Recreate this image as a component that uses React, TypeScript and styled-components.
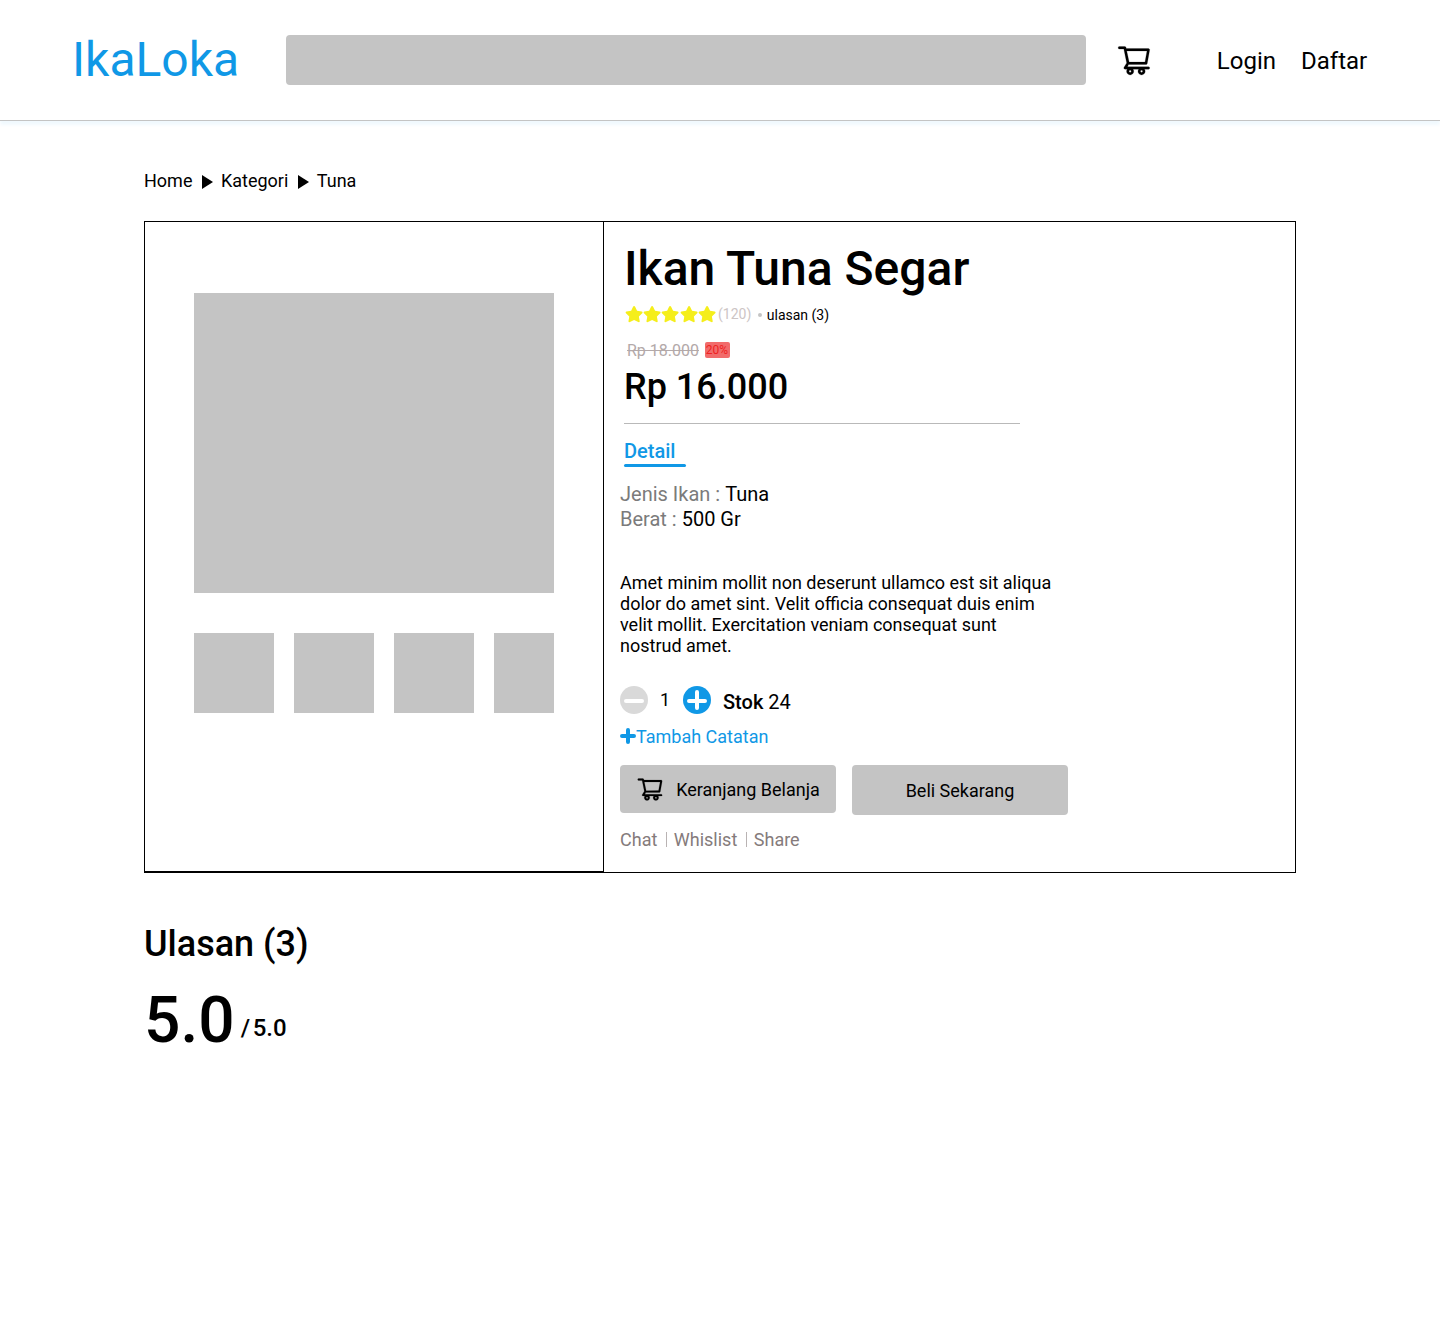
import React from "react";
import styled, { createGlobalStyle } from "styled-components";
import { AiOutlineShoppingCart } from "react-icons/ai";
import { FaStar } from "react-icons/fa";

const BLUE = "#1098e6";
const GREY = "#c4c4c4";

const GlobalStyle = createGlobalStyle`
  * { box-sizing: border-box; }
  body { margin: 0; background: #fff; color: #000; font-family: Roboto, "Liberation Sans", sans-serif; }
  h1, h2, p { margin: 0; font-weight: inherit; }
  button { font: inherit; color: inherit; border: 0; padding: 0; background: none; }
`;

const Text = styled.span<{ $size: number; $weight?: number; $color?: string }>`
  font-size: ${(p) => p.$size}px;
  line-height: ${(p) => Math.round(p.$size * 1.172)}px;
  font-weight: ${(p) => p.$weight ?? 400};
  color: ${(p) => p.$color ?? "#000"};
  white-space: nowrap;
`;

const Page = styled.div`
  min-height: 1336px;
`;

const Header = styled.header`
  display: flex;
  align-items: center;
  height: 121px;
  padding: 0 72.8px 1px 72px;
  border-bottom: 1px solid ${GREY};
  box-shadow: 0 4px 3px rgba(16, 152, 230, 0.06);
`;

const Logo = styled.div`
  width: 214px;
  font-size: 48px;
  line-height: 56px;
  color: ${BLUE};
`;

const Search = styled.div`
  width: 800px;
  height: 50px;
  border-radius: 4px;
  background: ${GREY};
`;

const CartIcon = styled(AiOutlineShoppingCart)`
  flex: none;
  stroke: currentColor;
  stroke-width: 6px;
`;

const HeaderCart = styled.div`
  display: flex;
  margin-left: 30px;
`;

const Nav = styled.nav`
  display: flex;
  gap: 25px;
  margin-left: auto;
  padding-top: 2px;
`;

const Main = styled.main`
  width: 1152px;
  margin: 0 auto;
  padding-top: 49px;
`;

const Breadcrumb = styled.div`
  display: flex;
  align-items: center;
  height: 21px;
`;

const Arrow = styled.i`
  margin: 2px 7.5px 0 10px;
  border-left: 11px solid #000;
  border-top: 7px solid transparent;
  border-bottom: 7px solid transparent;
`;

const Card = styled.section`
  display: flex;
  height: 652px;
  margin-top: 30px;
  border: 1px solid #000;
`;

const Gallery = styled.div`
  width: 459px;
  border-right: 1px solid #000;
  border-bottom: 1px solid #000;
  padding: 71px 49px 0;
`;

const MainPhoto = styled.div`
  height: 300px;
  background: ${GREY};
`;

const Thumbs = styled.div`
  display: flex;
  gap: 20px;
  width: 360px;
  margin-top: 40px;
  overflow: hidden;
`;

const Thumb = styled.div`
  flex: 0 0 80px;
  height: 80px;
  background: ${GREY};
`;

const Info = styled.div`
  flex: 1;
  padding: 19px 0 0 16px;
`;

const Summary = styled.div`
  padding-left: 4px;
`;

const Title = styled.h1`
  font-size: 48px;
  line-height: 56px;
  font-weight: 500;
`;

const Rating = styled.div`
  display: flex;
  align-items: center;
  height: 18px;
  margin-top: 8px;
  padding-left: 1px;
`;

const Stars = styled.div`
  display: flex;
  width: 93px;
  padding-top: 1px;
`;

const Star = styled(FaStar)`
  flex: none;
  width: 18.2px;
  height: 16.2px;
  color: #f5ee1b;
`;

const ReviewCount = styled(Text)`
  margin-top: 2px;
`;

const Dot = styled.i`
  width: 4px;
  height: 4px;
  margin: 2px 5px 0 6.5px;
  border-radius: 50%;
  background: ${GREY};
`;

const OldPrice = styled.div`
  display: flex;
  align-items: center;
  gap: 6px;
  height: 19px;
  margin: 18px 0 0 3px;
`;

const Discount = styled.span`
  width: 25px;
  height: 16px;
  margin-top: -1px;
  padding-right: 1px;
  border-radius: 2px;
  background: #f16b6b;
  color: #ee2222;
  font-size: 12px;
  line-height: 16px;
  text-align: center;
`;

const Price = styled.p`
  margin-top: 6px;
  font-size: 36px;
  line-height: 42px;
  font-weight: 500;
`;

const Divider = styled.hr`
  width: 396px;
  height: 1px;
  margin: 15px 0 0;
  border: 0;
  background: #b9b9b9;
`;

const Tab = styled.div`
  width: 62px;
  margin-top: 16px;
  color: ${BLUE};
  font-size: 20px;
  line-height: 23px;
  font-weight: 500;
  &::after {
    content: "";
    display: block;
    height: 3px;
    margin-top: 1px;
    border-radius: 2px;
    background: ${BLUE};
  }
`;

const Spec = styled.dl`
  margin: 15px 0 0;
  font-size: 20px;
  line-height: 25px;
  div { display: flex; gap: 5px; }
  dt { color: #7b7b7b; }
  dd { margin: 0; }
`;

const Description = styled.p`
  width: 436px;
  margin-top: 40px;
  font-size: 18px;
  line-height: 21px;
`;

const Stock = styled.div`
  display: flex;
  align-items: center;
  height: 28px;
  margin-top: 30px;
`;

const Round = styled.button`
  display: flex;
  width: 28px;
  height: 28px;
`;

const Count = styled.span`
  width: 35px;
  padding: 0 1px 2px 0;
  font-size: 18px;
  line-height: 21px;
  text-align: center;
`;

const StockLabel = styled.span`
  margin: 4px 0 0 12px;
  font-size: 20px;
  line-height: 23px;
  b { font-weight: 500; }
`;

const Note = styled.button`
  display: flex;
  align-items: center;
  margin-top: 12px;
  color: ${BLUE};
  font-size: 18px;
  line-height: 21px;
  svg { margin-bottom: 1px; }
`;

const Actions = styled.div`
  display: flex;
  gap: 16px;
  margin-top: 18px;
`;

const Action = styled.button<{ $height: number }>`
  display: flex;
  align-items: center;
  justify-content: center;
  gap: 12px;
  width: 216px;
  height: ${(p) => p.$height}px;
  border-radius: 4px;
  background: ${GREY};
  font-size: 18px;
  line-height: 21px;
`;

const Links = styled.div`
  display: flex;
  align-items: center;
  height: 21px;
  margin-top: 14px;
  color: #857b7b;
  font-size: 18px;
  line-height: 21px;
`;

const Bar = styled.i`
  width: 1px;
  height: 15px;
  margin: 0 7px 0 8.5px;
  background: #b9b3b3;
`;

const Reviews = styled.section`
  padding-top: 50px;
`;

const ReviewsTitle = styled.h2`
  font-size: 36px;
  line-height: 42px;
  font-weight: 500;
`;

const Score = styled.div`
  display: flex;
  align-items: flex-end;
  margin-top: 18px;
`;

const ScoreTotal = styled.div`
  display: flex;
  gap: 2.5px;
  margin: 0 0 16px 6.3px;
`;

const MinusIcon = () => (
  <svg width="28" height="28" viewBox="0 0 28 28">
    <circle cx="14" cy="14" r="14" fill="#d9d9d9" />
    <path d="M6 15H22" stroke="#fff" strokeWidth="4" strokeLinecap="round" />
  </svg>
);

const PlusIcon = () => (
  <svg width="28" height="28" viewBox="0 0 28 28">
    <circle cx="14" cy="14" r="14" fill={BLUE} />
    <path d="M6 15H22M14 6V22" stroke="#fff" strokeWidth="4" strokeLinecap="round" />
  </svg>
);

const AddIcon = () => (
  <svg width="16" height="16" viewBox="0 0 16 16">
    <path d="M2 8H14M8 2V14" stroke={BLUE} strokeWidth="4" strokeLinecap="round" />
  </svg>
);

export default function App() {
  return (
    <Page>
      <GlobalStyle />
      <Header>
        <Logo>IkaLoka</Logo>
        <Search />
        <HeaderCart><CartIcon size={36} /></HeaderCart>
        <Nav>
          <Text $size={24}>Login</Text>
          <Text $size={24}>Daftar</Text>
        </Nav>
      </Header>
      <Main>
        <Breadcrumb>
          <Text $size={18}>Home</Text>
          <Arrow />
          <Text $size={18}>Kategori</Text>
          <Arrow />
          <Text $size={18}>Tuna</Text>
        </Breadcrumb>
        <Card>
          <Gallery>
            <MainPhoto />
            <Thumbs>
              {[0, 1, 2, 3].map((i) => <Thumb key={i} />)}
            </Thumbs>
          </Gallery>
          <Info>
            <Summary>
              <Title>Ikan Tuna Segar</Title>
              <Rating>
                <Stars>
                  {[0, 1, 2, 3, 4].map((i) => <Star key={i} />)}
                </Stars>
                <Text $size={14} $color="#cdc5c5">(120)</Text>
                <Dot />
                <ReviewCount $size={14}>ulasan (3)</ReviewCount>
              </Rating>
              <OldPrice>
                <Text as="s" $size={16} $color="#b3a9a9">Rp 18.000</Text>
                <Discount>20%</Discount>
              </OldPrice>
              <Price>Rp 16.000</Price>
              <Divider />
              <Tab>Detail</Tab>
            </Summary>
            <Spec>
              <div><dt>Jenis Ikan :</dt><dd>Tuna</dd></div>
              <div><dt>Berat :</dt><dd>500 Gr</dd></div>
            </Spec>
            <Description>
              Amet minim mollit non deserunt ullamco est sit aliqua dolor do amet sint. Velit officia
              consequat duis enim velit mollit. Exercitation veniam consequat sunt nostrud amet.
            </Description>
            <Stock>
              <Round><MinusIcon /></Round>
              <Count>1</Count>
              <Round><PlusIcon /></Round>
              <StockLabel><b>Stok</b> 24</StockLabel>
            </Stock>
            <Note><AddIcon />Tambah Catatan</Note>
            <Actions>
              <Action $height={48}><CartIcon size={28} />Keranjang Belanja</Action>
              <Action $height={50}>Beli Sekarang</Action>
            </Actions>
            <Links>
              <span>Chat</span>
              <Bar />
              <span>Whislist</span>
              <Bar />
              <span>Share</span>
            </Links>
          </Info>
        </Card>
        <Reviews>
          <ReviewsTitle>Ulasan (3)</ReviewsTitle>
          <Score>
            <Text $size={64} $weight={500}>5.0</Text>
            <ScoreTotal>
              <Text $size={24} $weight={500}>/</Text>
              <Text $size={24} $weight={500}>5.0</Text>
            </ScoreTotal>
          </Score>
        </Reviews>
      </Main>
    </Page>
  );
}
